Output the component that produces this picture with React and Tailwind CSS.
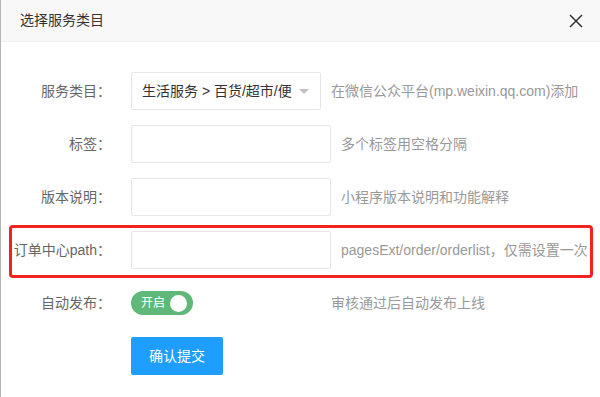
import React from "react";

const FONT = { fontFamily: '"Liberation Sans", "Noto Sans CJK SC", sans-serif' };

function Label({ children }) {
  return (
    <div className="w-[110px] shrink-0 text-right text-[14px] text-[#666] whitespace-nowrap leading-[38px]">
      {children}
    </div>
  );
}

function Help({ children, className = "" }) {
  return (
    <div className={"text-[14px] text-[#999] whitespace-nowrap leading-[38px] " + className}>{children}</div>
  );
}

function TextInput() {
  return <div className="w-[200px] h-[38px] shrink-0 border border-[#e6e6e6] rounded-[2px] bg-white" />;
}

export default function App() {
  return (
    <div className="w-[600px] h-[397px] bg-white border-l border-[#b5b5b5] overflow-hidden" style={FONT}>
      <div className="h-[42px] bg-[#f8f8f8] border-b border-[#eee] flex items-center justify-between pl-[19px] pr-[17px]">
        <span className="text-[14px] text-[#333]">选择服务类目</span>
        <svg width="14" height="14" viewBox="0 0 14 14" className="text-[#333]">
          <path d="M1 1 L13 13 M13 1 L1 13" stroke="currentColor" strokeWidth="1.5" fill="none" />
        </svg>
      </div>

      <div className="pt-[30px] flex flex-col gap-[15px]">
        <div className="flex items-center h-[38px]">
          <Label>服务类目：</Label>
          <div className="w-[200px] ml-[20px] shrink-0">
            <div className="relative w-[190px] h-[38px] border border-[#e6e6e6] rounded-[2px] bg-white pl-[10px] pr-[30px] overflow-hidden whitespace-nowrap text-[14px] text-[#333] leading-[36px]">
              生活服务 &gt; 百货/超市/便
              <div className="absolute right-[11px] top-[16px] w-0 h-0 border-l-[5px] border-r-[5px] border-t-[5px] border-l-transparent border-r-transparent border-t-[#c2c2c2]" />
            </div>
          </div>
          <Help>在微信公众平台(mp.weixin.qq.com)添加</Help>
        </div>

        <div className="flex items-center h-[38px]">
          <Label>标签：</Label>
          <div className="ml-[20px]">
            <TextInput />
          </div>
          <Help className="ml-[10px]">多个标签用空格分隔</Help>
        </div>

        <div className="flex items-center h-[38px]">
          <Label>版本说明：</Label>
          <div className="ml-[20px]">
            <TextInput />
          </div>
          <Help className="ml-[10px]">小程序版本说明和功能解释</Help>
        </div>

        <div className="relative flex items-center h-[38px]">
          <div className="absolute left-[8px] right-[7px] top-[-6px] bottom-[-9px] border-[3px] border-[#f0231e] rounded-[4px]" />
          <Label>订单中心path：</Label>
          <div className="ml-[20px]">
            <TextInput />
          </div>
          <Help className="ml-[10px]">pagesExt/order/orderlist，仅需设置一次</Help>
        </div>

        <div className="flex items-center h-[38px]">
          <Label>自动发布：</Label>
          <div className="w-[200px] ml-[20px] shrink-0 flex items-center">
            <div className="w-[62px] h-[24px] rounded-full bg-[#5fb878] flex items-center justify-between pl-[10px] pr-[6px]">
              <span className="text-[12px] text-white leading-none">开启</span>
              <span className="w-[17px] h-[17px] rounded-full bg-white" />
            </div>
          </div>
          <Help>审核通过后自动发布上线</Help>
        </div>

        <div className="flex">
          <div className="w-[110px] shrink-0" />
          <div className="ml-[20px] w-[92px] h-[38px] rounded-[2px] bg-[#1e9fff] text-white text-[14px] flex items-center justify-center">
            确认提交
          </div>
        </div>
      </div>
    </div>
  );
}
